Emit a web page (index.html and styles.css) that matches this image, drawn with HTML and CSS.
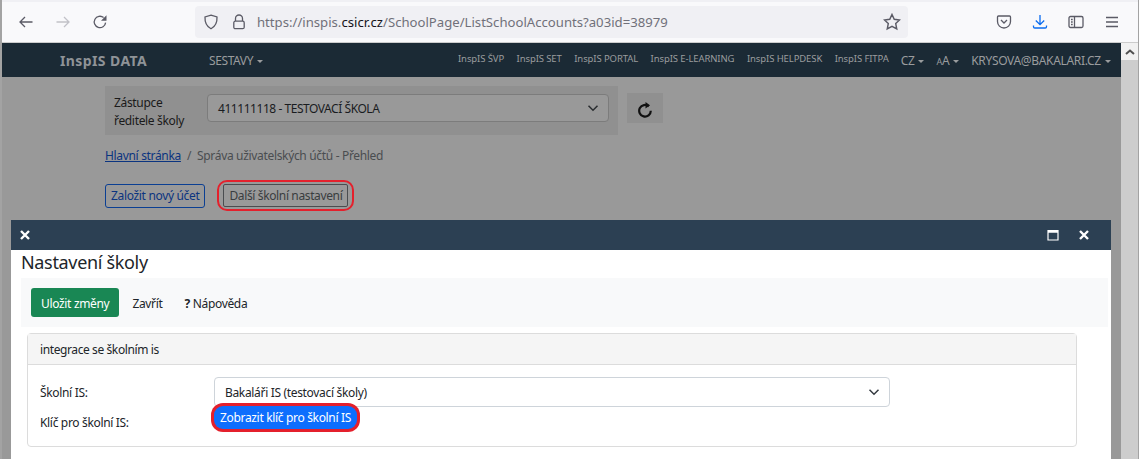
FILE: index.html
```html
<!DOCTYPE html>
<html lang="cs">
<head>
<meta charset="utf-8">
<title>InspIS DATA</title>
<link rel="stylesheet" href="styles.css">
</head>
<body>
<div class="window">
  <header class="chrome">
    <div class="chrome-nav">
      <svg class="ico" viewBox="0 0 16 16"><path d="M14.5 8H2M7 3 2 8l5 5" class="st"/></svg>
      <svg class="ico dim" viewBox="0 0 16 16"><path d="M1.5 8H14M9 3l5 5-5 5" class="st"/></svg>
      <svg class="ico" viewBox="0 0 16 16"><path d="M13.6 8.600A5.700 5.700 0 1 1 11.600 3.600" class="st"/><path d="M14.500 1.200v5.600H9z" class="fl"/></svg>
    </div>
    <div class="urlbar">
      <svg class="ico shield" viewBox="0 0 16 16"><path d="M8 1.200 14 3c.3 5.500-1.800 9.500-6 11.800C3.800 12.500 1.700 8.500 2 3z" class="st"/></svg>
      <svg class="ico lock" viewBox="0 0 16 16"><path d="M4.500 7V4.500a3.500 3.500 0 0 1 7 0V7" class="st"/><rect x="2.800" y="7.200" width="10.400" height="7.500" rx="1.500" class="st"/></svg>
      <span class="url">https://inspis.<b>csicr.cz</b>/SchoolPage/ListSchoolAccounts?a03id=38979</span>
      <svg class="ico star" viewBox="0 0 16 16"><path d="m8 1.300 2 4.300 4.700.6-3.400 3.200.9 4.700L8 11.800l-4.200 2.300.9-4.700L1.300 6.200 6 5.600z" class="st"/></svg>
    </div>
    <div class="chrome-tools">
      <svg class="ico" viewBox="0 0 16 16"><path d="M2.500 2h11c.6 0 1 .4 1 1v4.500a6.500 6.500 0 0 1-13 0V3c0-.6.400-1 1-1z" class="st"/><path d="m5 6 3 3 3-3" class="st"/></svg>
      <svg class="ico blue" viewBox="0 0 16 16"><path d="M8 1v9.500M3.800 6.500 8 10.700l4.200-4.200M1.500 11.500v1.200c0 .9.500 1.300 1.300 1.300h10.400c.8 0 1.300-.4 1.300-1.300v-1.200" class="st"/></svg>
      <svg class="ico" viewBox="0 0 16 16"><rect x="1" y="2.500" width="14" height="11" rx="1.500" class="st"/><path d="M6.500 2.500v11M3 5.500h1.700M3 8h1.700M3 10.500h1.700" class="st"/></svg>
      <svg class="ico" viewBox="0 0 16 16"><path d="M2 3.500h12M2 8h12M2 12.500h12" class="st"/></svg>
    </div>
  </header>

  <div class="viewport">
    <div class="page">
      <nav class="topnav">
        <a class="brand">InspIS DATA</a>
        <a class="menu sestavy caret">SESTAVY</a>
        <div class="navlinks">
          <a>InspIS ŠVP</a><a>InspIS SET</a><a>InspIS PORTAL</a><a>InspIS E-LEARNING</a><a>InspIS HELPDESK</a><a>InspIS FITPA</a>
        </div>
        <div class="navright">
          <a class="menu caret">CZ</a>
          <a class="menu caret"><small>A</small>A</a>
          <a class="menu caret">KRYSOVA@BAKALARI.CZ</a>
        </div>
      </nav>
      <main class="content">
        <div class="role-row">
          <div class="role-box">
            <div class="role-label">Zástupce<br>ředitele školy</div>
            <div class="select school">411111118 - TESTOVACÍ ŠKOLA
              <svg class="chev" viewBox="0 0 16 16"><path d="m2 5 6 6 6-6"/></svg>
            </div>
          </div>
          <div class="refresh">
            <svg viewBox="0 0 16 16"><path d="M11.800 4.400A5.800 5.800 0 1 0 13.800 8.800" class="rs"/><path d="M8.500 0v6.500L13 3.300z" class="rf"/></svg>
          </div>
        </div>
        <div class="crumbs"><a>Hlavní stránka</a><span class="sep">/</span><span>Správa uživatelských účtů - Přehled</span></div>
        <div class="actions">
          <a class="btn-outline">Založit nový účet</a>
          <span class="ring-gray"><a class="btn-gray">Další školní nastavení</a></span>
        </div>
      </main>
    </div>
    <div class="scrollbar">
      <div class="sb-up"><svg viewBox="0 0 10 6"><path d="M1 5 5 1.500 9 5"/></svg></div>
    </div>

    <section class="modal">
      <div class="modal-head">
        <svg class="wx" viewBox="0 0 12 12"><path d="m2 2 8 8M10 2l-8 8"/></svg>
        <div class="modal-ctl">
          <svg class="wmax" viewBox="0 0 12 12"><path d="M1 1.500h10v9.500H1z"/><path d="M1 2.500h10" class="thick"/></svg>
          <svg class="wx" viewBox="0 0 12 12"><path d="m2 2 8 8M10 2l-8 8"/></svg>
        </div>
      </div>
      <div class="modal-body">
        <h1>Nastavení školy</h1>
        <div class="toolbar">
          <a class="btn-save">Uložit změny</a>
          <a class="tool">Zavřít</a>
          <a class="tool"><b>?</b> Nápověda</a>
        </div>
        <div class="card">
          <div class="card-head">integrace se školním is</div>
          <div class="card-body">
            <div class="row-is">
              <label>Školní IS:</label>
              <div class="select is-select">Bakaláři IS (testovací školy)
                <svg class="chev" viewBox="0 0 16 16"><path d="m2 5 6 6 6-6"/></svg>
              </div>
            </div>
            <div class="row-key">
              <label>Klíč pro školní IS:</label>
              <a class="btn-blue">Zobrazit klíč pro školní IS</a>
            </div>
          </div>
        </div>
      </div>
    </section>
  </div>
</div>
</body>
</html>
```

FILE: styles.css
```css
* { box-sizing: border-box; }
html, body { margin: 0; height: 100%; overflow: hidden; background: #fff; }
body { font-family: "Noto Sans", "Open Sans", sans-serif; font-size: 12px; letter-spacing: -0.33px; color: #212529; }
a { display: inline-block; }

.window { height: 459px; border-left: 2px solid #a3a3a3; border-right: 1px solid #a3a3a3; display: flex; flex-direction: column; }

/* browser chrome */
.chrome { height: 43px; flex: none; background: #f9f9fb; border-top: 2px solid #f0f0f4; display: flex; align-items: center; border-bottom: 1px solid #ccc; }
.chrome-nav { width: 193px; padding-left: 16px; display: flex; gap: 21px; }
.ico { width: 16px; height: 16px; flex: none; color: #5b5b66; }
.ico.dim { color: #c2c2c8; }
.ico.blue { color: #0a6cf0; }
.st { fill: none; stroke: currentColor; stroke-width: 1.300; }
.fl { fill: currentColor; }
.urlbar { width: 713px; height: 32px; margin-top: -1px; background: #f0f0f4; border-radius: 4px; display: flex; align-items: center; padding-left: 8px; }
.lock { margin-left: 12px; }
.url { margin-left: 10px; font-size: 13.150px; letter-spacing: 0; color: #70707a; flex: 1; white-space: nowrap; }
.url b { font-weight: 400; color: #15141a; }
.star { margin-right: 7px; width: 18px; height: 18px; }
.chrome-tools { margin-left: 88px; display: flex; gap: 20px; }

.viewport { flex: 1; display: flex; position: relative; min-height: 0; }
.page { flex: 1; min-width: 0; background: #999; }
.scrollbar { width: 17px; flex: none; background: #cdcdcd; }
.sb-up { height: 17px; background: #f1f1f1; display: flex; align-items: center; justify-content: center; }
.sb-up svg { width: 10px; height: 6px; fill: none; stroke: #505050; stroke-width: 2; }

/* top nav */
.topnav { height: 34px; background: #1b2a35; color: #9a9c9e; display: flex; align-items: center; }
.brand { margin-left: 58px; width: 149px; font-size: 14px; font-weight: 700; letter-spacing: 0.4px; color: #8f9397; }
.menu { font-size: 12px; white-space: nowrap; }
.sestavy { width: 249px; letter-spacing: -0.4px; }
.caret::after { content: ""; display: inline-block; margin-left: 4px; vertical-align: 2px; border-top: 3px solid currentColor; border-left: 3px solid transparent; border-right: 3px solid transparent; }
.navlinks { display: flex; gap: 12.500px; font-size: 9.500px; letter-spacing: -0.1px; white-space: nowrap; margin-top: -3px; }
.navright { display: flex; gap: 12px; margin-left: 12px; }
.menu small { font-size: 9px; }

/* page content */
.content { padding: 9px 0 0 103px; }
.role-row { display: flex; gap: 9px; }
.role-box { width: 513px; height: 49px; background: #909090; display: flex; align-items: flex-start; gap: 15px; padding: 8px 9px 0 9px; }
.role-label { width: 78px; flex: none; line-height: 18px; color: #1a1a1a; }
.select { position: relative; background: #999; border: 1px solid #7c7c7c; border-radius: 4px; height: 28px; flex: 1; padding-left: 10px; display: flex; align-items: center; color: #191c1f; }
.school { letter-spacing: -0.45px; }
.chev { position: absolute; right: 9px; top: 50%; margin-top: -6px; width: 12px; height: 12px; fill: none; stroke: #2a2d30; stroke-width: 2; }
.refresh { width: 36px; height: 30px; background: #909090; margin-top: 7px; padding-top: 3px; display: flex; align-items: center; justify-content: center; }
.refresh svg { width: 16px; height: 16px; }
.rs { fill: none; stroke: #111; stroke-width: 2.200; }
.rf { fill: #111; }
.crumbs { margin-top: 12px; color: #4a4d50; display: flex; gap: 6px; line-height: 18px; }
.crumbs a { color: #0b3480; text-decoration: underline; }
.actions { margin-top: 15px; display: flex; align-items: center; gap: 12px; }
.btn-outline { height: 24px; line-height: 22px; padding: 0 5px; border: 1px solid #0b3f93; border-radius: 3px; color: #0b3480; }
.ring-gray { padding: 2px 4px; border: 2px solid #e4202c; border-radius: 10px; display: inline-flex; }
.btn-gray { height: 23px; line-height: 21px; padding: 0 5px; border: 1px solid #4a4d50; border-radius: 2px; color: #3a3d40; letter-spacing: -0.37px; }

/* modal */
.modal { position: absolute; left: 9px; top: 177px; width: 1100px; bottom: -10px; background: #fff; }
.modal-head { height: 30px; background: #2c4053; display: flex; align-items: center; justify-content: space-between; padding: 0 21px 0 8px; }
.modal-ctl { display: flex; gap: 19px; align-items: center; }
.wx { width: 12px; height: 12px; stroke: #fff; stroke-width: 2.400; fill: none; }
.wmax { width: 12px; height: 12px; stroke: #fff; fill: none; stroke-width: 1.200; }
.wmax .thick { stroke-width: 2.500; }
.modal-body { padding: 0 3px 0 10px; }
.modal-body h1 { margin: 0; font-size: 18px; font-weight: 400; line-height: 25px; color: #212529; height: 28px; }
.toolbar { height: 49px; background: #f8f9fa; display: flex; align-items: center; padding-left: 10px; gap: 13px; }
.btn-save { height: 29px; line-height: 31px; padding: 0 10px; background: #198754; color: #fff; border-radius: 3px; }
.tool { color: #212529; margin-right: 9px; padding-top: 2px; }
.card { margin: 6px 0 0 6px; width: 1050px; height: 114px; border: 1px solid #dcdcdc; border-radius: 4px; }
.card-head { height: 31px; background: #f5f5f5; border-bottom: 1px solid #dcdcdc; line-height: 31px; padding-left: 12px; letter-spacing: -0.4px; }
.card-body { padding: 12px 12px 0; }
.row-is, .row-key { display: flex; align-items: center; position: relative; }
.row-is label, .row-key label { width: 174px; flex: none; }
.is-select { background: #fff; border-color: #ced4da; height: 30px; flex: none; width: 676px; color: #212529; }
.is-select .chev { stroke: #343a40; }
.row-key { height: 30px; }
.btn-blue { height: 23px; line-height: 23px; padding: 0 6px; margin-top: -10px; background: #0d6efd; color: #fff; border-radius: 9px; box-shadow: 0 0 0 3px #e4202c; }
```
